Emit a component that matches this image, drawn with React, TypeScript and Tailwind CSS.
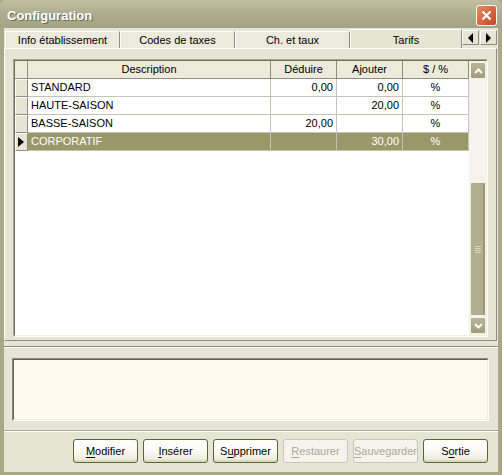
import React from 'react';

type Row = { desc: string; ded: string; aj: string; unit: string; sel?: boolean };

const ROWS: Row[] = [
  { desc: 'STANDARD', ded: '0,00', aj: '0,00', unit: '%' },
  { desc: 'HAUTE-SAISON', ded: '', aj: '20,00', unit: '%' },
  { desc: 'BASSE-SAISON', ded: '20,00', aj: '', unit: '%' },
  { desc: 'CORPORATIF', ded: '', aj: '30,00', unit: '%', sel: true },
];

const TABS = [
  { label: 'Info établissement', w: 'w-[115px]' },
  { label: 'Codes de taxes', w: 'w-[115px]' },
  { label: 'Ch. et taux', w: 'w-[115px]' },
];

function Mn({ text, at }: { text: string; at: number }) {
  return (
    <>
      {text.slice(0, at)}
      <span className="underline underline-offset-[2px]">{text[at]}</span>
      {text.slice(at + 1)}
    </>
  );
}

function XpButton({ text, at, disabled }: { text: string; at: number; disabled?: boolean }) {
  return (
    <button
      type="button"
      className={
        'w-[65px] h-[24px] rounded-[3px] border text-[11px] ' +
        (disabled
          ? 'border-[#c9c7ba] bg-[#f4f3ee] text-[#aca899]'
          : 'border-[#4f6b2d] bg-gradient-to-b from-white via-[#fbfaf4] to-[#e9e6d4] text-black shadow-[inset_0_-2px_0_#dcd8c3]')
      }
    >
      <Mn text={text} at={at} />
    </button>
  );
}

function ScrollBtn({ down }: { down?: boolean }) {
  return (
    <div className="h-[17px] w-[16px] rounded-[2px] border border-[#f2f1e6] bg-gradient-to-b from-[#b8b699] to-[#9e9c7a] flex items-center justify-center">
      <svg width="9" height="6" viewBox="0 0 9 6">
        <path
          d={down ? 'M1 1 L4.5 4.5 L8 1' : 'M1 5 L4.5 1.5 L8 5'}
          fill="none"
          stroke="white"
          strokeWidth="2"
        />
      </svg>
    </div>
  );
}

function Grid() {
  const cell = 'h-[18px] border-r border-b border-[#c5c3b8] flex items-center px-[3px] truncate';
  return (
    <div className="w-[475px] h-[278px] ml-[8px] mt-[10px] border border-t-[#a7a593] border-l-[#a7a593] border-r-white border-b-white">
      <div className="h-full border border-t-[#6f6d62] border-l-[#6f6d62] border-r-[#f1efe2] border-b-[#f1efe2] flex">
        <div className="w-[454px] bg-white flex flex-col">
          <div className="flex h-[18px] bg-[#ebeadb]">
            <div className="w-[13px] border-r border-b border-[#8f8d7d]" />
            {['Description', 'Déduire', 'Ajouter', '$ / %'].map((h, i) => (
              <div
                key={h}
                className={
                  (i === 0 ? 'w-[243px]' : 'w-[66px]') +
                  ' border-r border-b border-[#8f8d7d] flex items-center justify-center'
                }
              >
                {h}
              </div>
            ))}
          </div>
          {ROWS.map((r) => (
            <div
              key={r.desc}
              className={'flex ' + (r.sel ? 'bg-[#9a9868] text-white' : 'text-black')}
            >
              <div className="w-[13px] h-[18px] bg-[#e6e5d5] border-t border-l border-t-white border-l-white border-r border-b border-r-[#8f8d7d] border-b-[#8f8d7d] flex items-center">
                {r.sel && (
                  <svg width="6" height="10" viewBox="0 0 6 10" className="ml-[2px]">
                    <path d="M0 0 L6 5 L0 10 Z" fill="black" />
                  </svg>
                )}
              </div>
              <div className={cell + ' w-[243px]'}>{r.desc}</div>
              <div className={cell + ' w-[66px] justify-end'}>{r.ded}</div>
              <div className={cell + ' w-[66px] justify-end'}>{r.aj}</div>
              <div className={cell + ' w-[66px] justify-center'}>{r.unit}</div>
            </div>
          ))}
        </div>
        <div className="w-[17px] bg-[#f4f3ed] flex flex-col items-center pt-[1px] pb-[1px] pl-[1px]">
          <ScrollBtn />
          <div className="flex-1 w-full flex flex-col justify-end">
            <div className="h-[134px] w-[16px] rounded-[2px] border border-[#f2f1e6] bg-[#b1ae92] shadow-[inset_-2px_0_0_#9d9a78] flex flex-col items-center justify-center gap-[1px] mb-[1px]">
              {[0, 1, 2, 3].map((k) => (
                <div key={k} className="w-[6px] h-[1px] bg-[#d9d7b8]" />
              ))}
            </div>
          </div>
          <ScrollBtn down />
        </div>
      </div>
    </div>
  );
}

export default function App() {
  return (
    <div className="w-[502px] h-[475px] flex flex-col bg-[#a9a886] text-[11px] font-['Liberation_Sans',Arial,sans-serif] overflow-hidden">
      {/* title bar */}
      <div className="h-[28px] flex items-center justify-between pl-[7px] pr-[5px] pt-[3px] bg-gradient-to-b from-[#c0bfa2] via-[#aeac8d] to-[#a4a383] rounded-t-[6px]">
        <span className="text-white font-bold text-[13px] [text-shadow:1px_1px_0_#6a6950]">
          Configuration
        </span>
        <div className="w-[21px] h-[21px] rounded-[3px] border border-white bg-gradient-to-br from-[#e88a62] to-[#c2451f] flex items-center justify-center">
          <svg width="11" height="11" viewBox="0 0 11 11">
            <path d="M1.5 1.5 L9.5 9.5 M9.5 1.5 L1.5 9.5" stroke="white" strokeWidth="2.2" />
          </svg>
        </div>
      </div>

      {/* client area */}
      <div className="flex-1 mx-[4px] mb-[3px] bg-[#e6e5d5] flex flex-col">
        {/* tabs */}
        <div className="flex items-end h-[20px] pl-[1px]">
          {TABS.map((t) => (
            <div
              key={t.label}
              className={
                t.w +
                ' h-[17px] bg-[#ebeadc] border-t border-l border-white border-r border-r-[#8f8d7d] flex items-center justify-center'
              }
            >
              {t.label}
            </div>
          ))}
          <div className="w-[112px] h-[19px] bg-[#e6e5d5] border-t border-l border-white border-r border-r-[#8f8d7d] flex items-start justify-center pt-[2px]">
            Tarifs
          </div>
          <div className="flex-1 h-[19px] flex items-start justify-end pt-[1px] gap-[1px] pr-[1px]">
            {['M5 0 L0 5 L5 10 Z', 'M0 0 L5 5 L0 10 Z'].map((d) => (
              <div
                key={d}
                className="w-[17px] h-[15px] bg-[#e6e5d5] border border-t-white border-l-white border-r-[#8f8d7d] border-b-[#8f8d7d] flex items-center justify-center"
              >
                <svg width="5" height="10" viewBox="0 0 5 10">
                  <path d={d} fill="black" />
                </svg>
              </div>
            ))}
          </div>
        </div>

        {/* tab panel */}
        <div className="h-[293px] border-t border-l border-white border-r border-b border-r-[#8f8d7d] border-b-[#8f8d7d] mr-[1px]">
          <Grid />
        </div>

        <div className="mt-[5px] h-[2px] border-t border-[#8d8b7b] border-b border-b-white" />

        <div className="mt-[10px] ml-[8px] w-[477px] h-[63px] border border-t-[#8f8d7d] border-l-[#8f8d7d] border-r-white border-b-white">
          <div className="h-full bg-[#fefaee] border border-t-[#5e5c52] border-l-[#5e5c52] border-r-[#eeeddf] border-b-[#eeeddf]" />
        </div>

        <div className="mt-[9px] h-[2px] border-t border-[#a9a796] border-b border-b-white" />

        <div className="mt-[7px] flex justify-end gap-[5px] pr-[10px]">
          <XpButton text="Modifier" at={0} />
          <XpButton text="Insérer" at={0} />
          <XpButton text="Supprimer" at={1} />
          <XpButton text="Restaurer" at={0} disabled />
          <XpButton text="Sauvegarder" at={0} disabled />
          <XpButton text="Sortie" at={1} />
        </div>
      </div>
    </div>
  );
}
